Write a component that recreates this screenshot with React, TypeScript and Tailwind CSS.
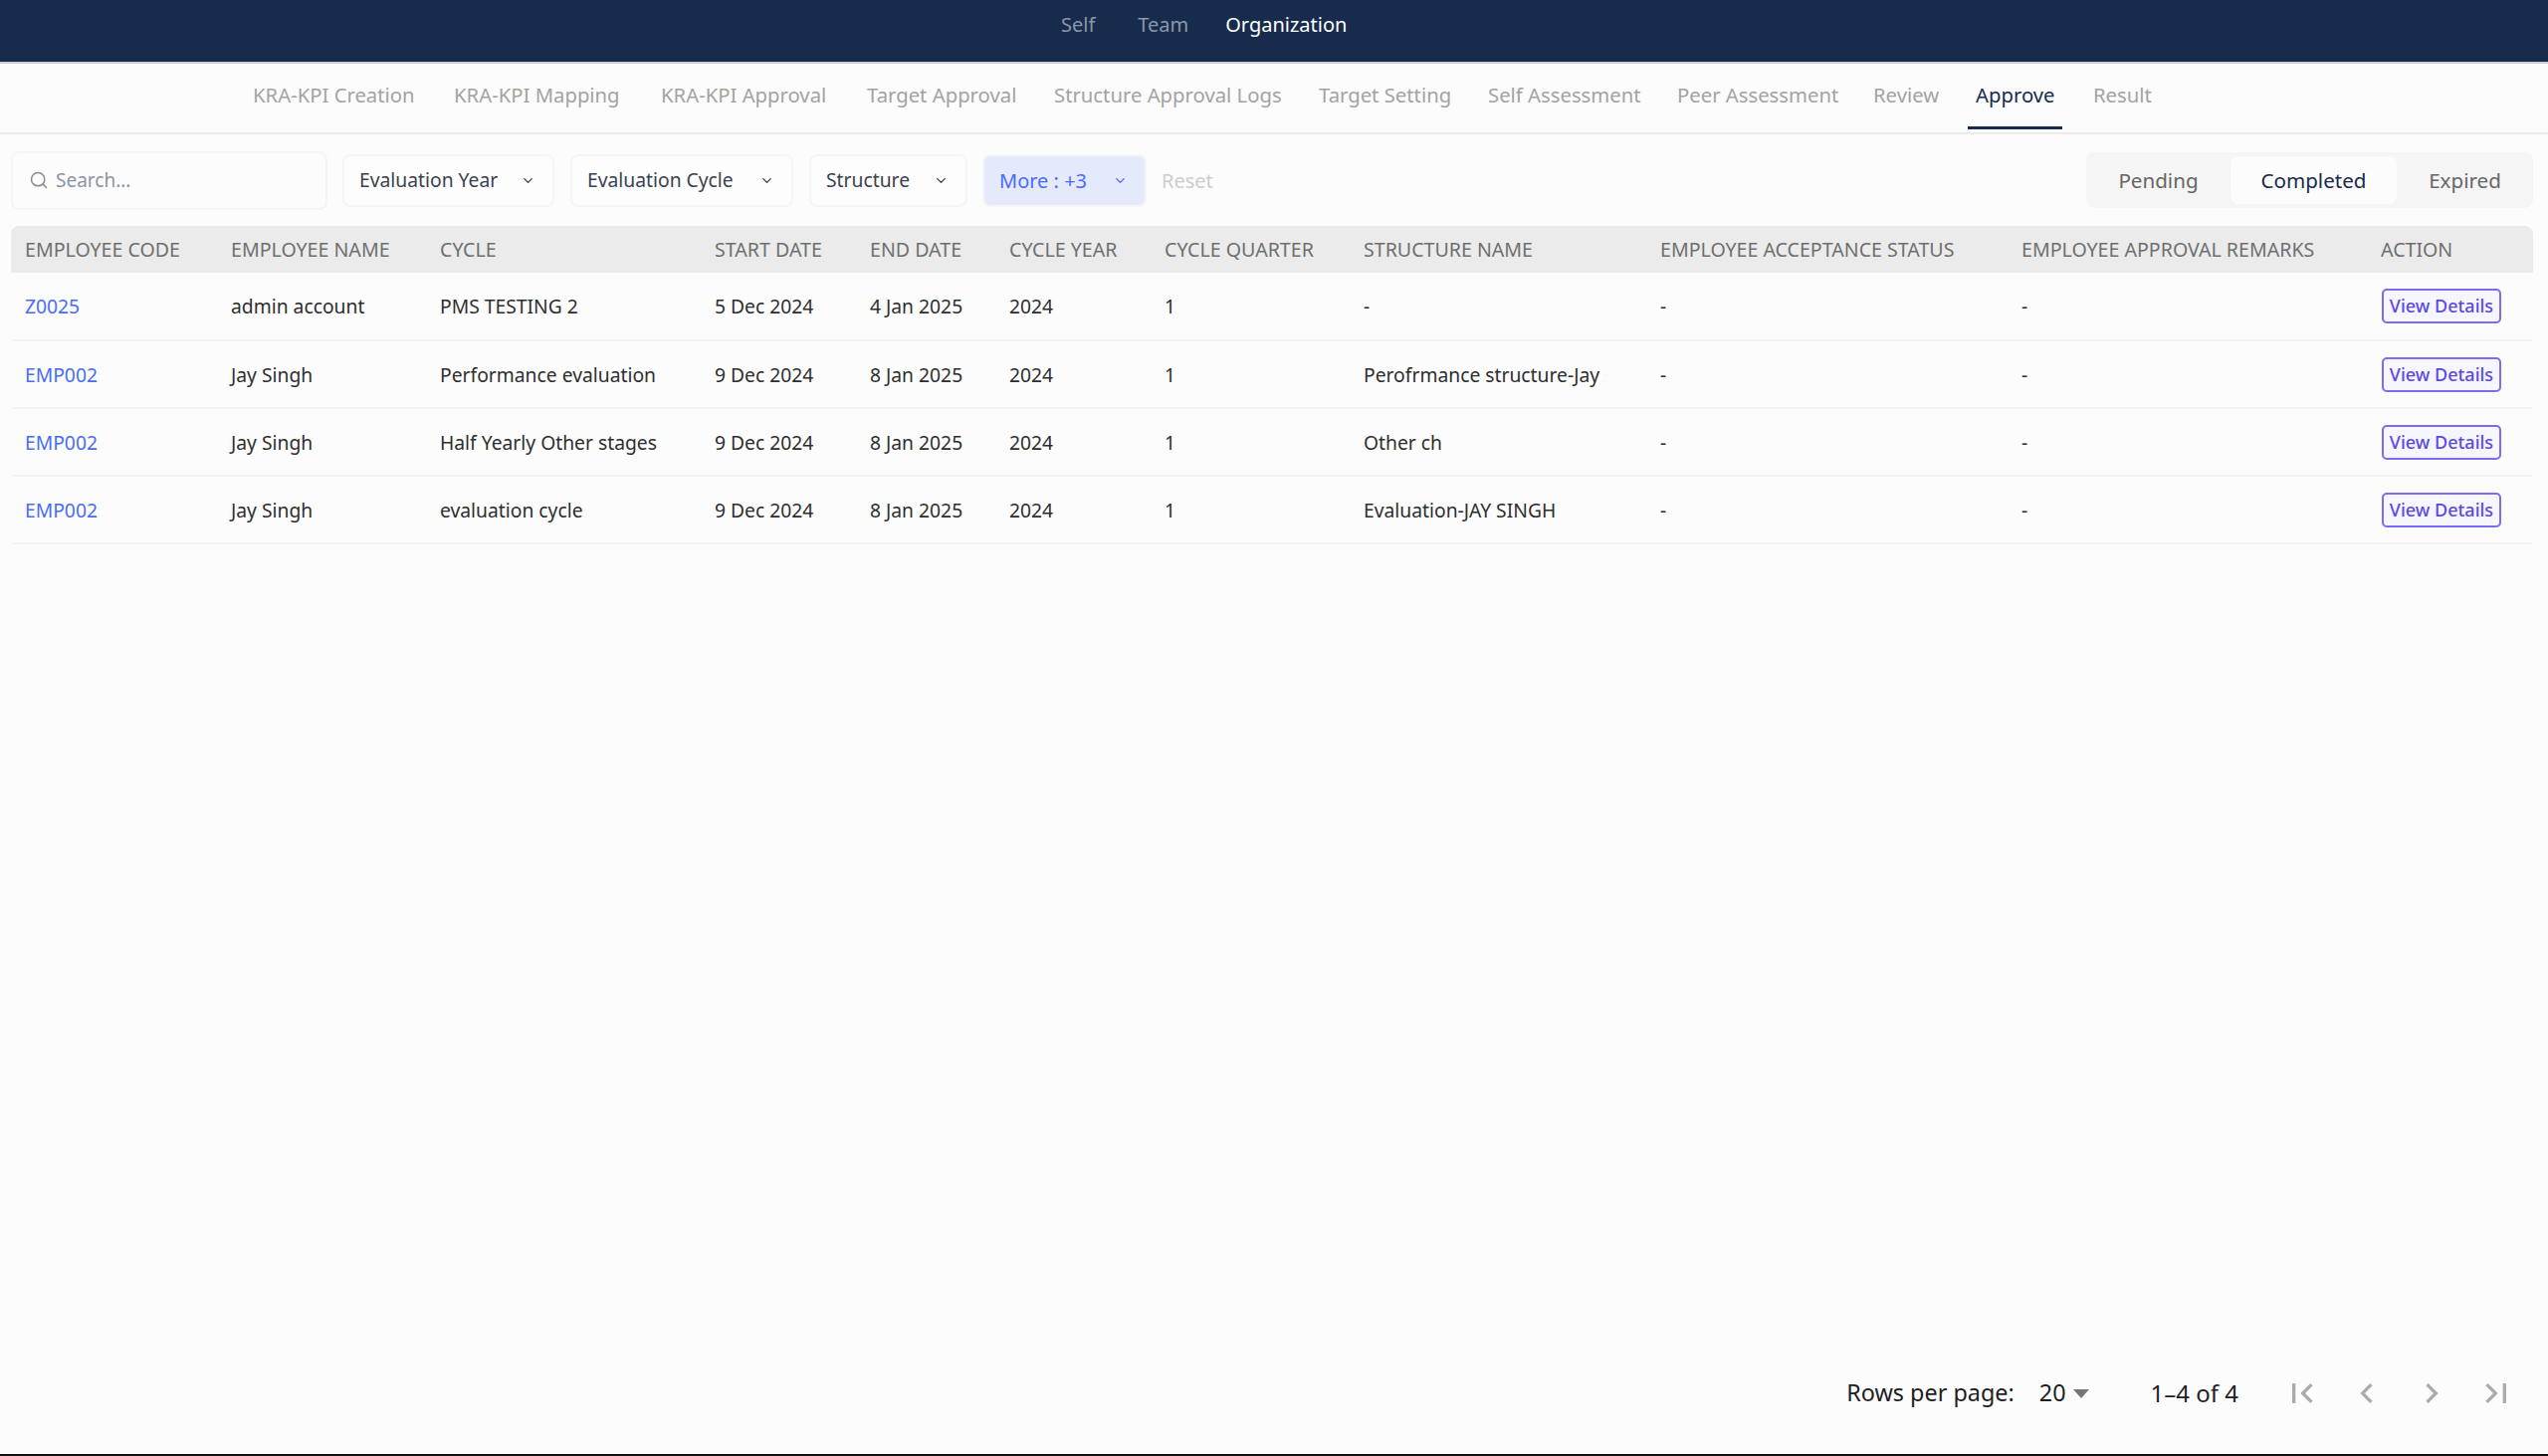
import React from 'react'
import { ChevronDown, Search } from 'lucide-react'

const topTabs = [
  { label: 'KRA-KPI Creation', width: 'w-[202px]' },
  { label: 'KRA-KPI Mapping', width: 'w-[208px]' },
  { label: 'KRA-KPI Approval', width: 'w-[207px]' },
  { label: 'Target Approval', width: 'w-[188px]' },
  { label: 'Structure Approval Logs', width: 'w-[266px]' },
  { label: 'Target Setting', width: 'w-[170px]' },
  { label: 'Self Assessment', width: 'w-[190px]' },
  { label: 'Peer Assessment', width: 'w-[197px]' },
  { label: 'Review', width: 'w-[103px]' },
  { label: 'Approve', width: 'w-[118px]' },
  { label: 'Result', width: 'w-[70px]' },
]

const columns = [
  { label: 'EMPLOYEE CODE', width: 'w-[207px]' },
  { label: 'EMPLOYEE NAME', width: 'w-[210px]' },
  { label: 'CYCLE', width: 'w-[276px]' },
  { label: 'START DATE', width: 'w-[156px]' },
  { label: 'END DATE', width: 'w-[140px]' },
  { label: 'CYCLE YEAR', width: 'w-[156px]' },
  { label: 'CYCLE QUARTER', width: 'w-[200px]' },
  { label: 'STRUCTURE NAME', width: 'w-[298px]' },
  { label: 'EMPLOYEE ACCEPTANCE STATUS', width: 'w-[363px]' },
  { label: 'EMPLOYEE APPROVAL REMARKS', width: 'w-[361px]' },
  { label: 'ACTION', width: 'w-[167px]' },
]

const rows = [
  ['Z0025', 'admin account', 'PMS TESTING 2', '5 Dec 2024', '4 Jan 2025', '2024', '1', '-', '-', '-'],
  ['EMP002', 'Jay Singh', 'Performance evaluation', '9 Dec 2024', '8 Jan 2025', '2024', '1', 'Perofrmance structure-Jay', '-', '-'],
  ['EMP002', 'Jay Singh', 'Half Yearly Other stages', '9 Dec 2024', '8 Jan 2025', '2024', '1', 'Other ch', '-', '-'],
  ['EMP002', 'Jay Singh', 'evaluation cycle', '9 Dec 2024', '8 Jan 2025', '2024', '1', 'Evaluation-JAY SINGH', '-', '-'],
]

const pageIcons = [
  'M18.41 16.59L13.82 12l4.59-4.59L17 6l-6 6 6 6zM6 6h2v12H6z',
  'M15.41 16.59L10.83 12l4.58-4.59L14 6l-6 6 6 6z',
  'M8.59 16.59L13.17 12 8.59 7.41 10 6l6 6-6 6z',
  'M5.59 7.41L10.18 12l-4.59 4.59L7 18l6-6-6-6zM16 6h2v12h-2z',
]

function Filter({ label, width }: { label: string; width: string }) {
  return (
    <div className={`${width} h-[53px] flex items-center justify-between pl-[15px] pr-[17px] bg-[#fdfdfd] border-2 border-[#f5f5f5] rounded-lg text-[19.3px] text-[#3a4250]`}>
      <span className="pt-px">{label}</span>
      <ChevronDown size={15} strokeWidth={2.2} />
    </div>
  )
}

export default function App() {
  return (
    <div className="w-full h-[1463px] flex flex-col bg-[#fcfcfc] border-b-2 border-[#111] text-[20px] font-['Noto_Sans',sans-serif] overflow-hidden">
      <div className="h-[64px] shrink-0 bg-[#172b4d] border-b-2 border-[#c9ccd2] flex items-start pl-[1066px] pt-[10px] gap-[43px] text-[#8c97a9]">
        <span>Self</span>
        <span>Team</span>
        <span className="-ml-[6px] text-white">Organization</span>
      </div>

      <div className="h-[71px] shrink-0 border-b-2 border-[#ebebeb] flex pl-[254px] text-[20.3px] text-[#a3a3a3]">
        {topTabs.map((tab) => (
          <div key={tab.label} className={`${tab.width} shrink-0`}>
            <div className="relative inline-block h-full pt-[16px]">
              <span className={tab.label === 'Approve' ? 'text-[#172b4d]' : ''}>{tab.label}</span>
              {tab.label === 'Approve' && <div className="absolute left-[-8px] right-[-8px] bottom-[3px] h-[3px] bg-[#172b4d]" />}
            </div>
          </div>
        ))}
      </div>

      <div className="h-[92px] shrink-0 flex items-center pl-[11px] pr-[15px]">
        <div className="w-[318px] h-[59px] flex items-center gap-[7px] pl-[16px] border-2 border-[#f5f5f5] rounded-lg text-[19px] text-[#8a94a6]">
          <Search size={20} strokeWidth={1.8} className="text-[#8b8b8b]" />
          <span className="pt-px">Search...</span>
        </div>
        <div className="flex items-center gap-4 ml-[15px]">
          <Filter label="Evaluation Year" width="w-[213px]" />
          <Filter label="Evaluation Cycle" width="w-[224px]" />
          <Filter label="Structure" width="w-[159px]" />
          <div className="w-[165px] h-[53px] -ml-px flex items-center justify-between pl-[15px] pr-[17px] bg-[#e4e9fc] border-2 border-[#f5f5f5] rounded-lg text-[#4a6cf7]">
            <span className="pt-px">More : +3</span>
            <ChevronDown size={15} strokeWidth={2.2} />
          </div>
        </div>
        <span className="ml-[15px] pt-px text-[#cdcdcd]">Reset</span>
        <div className="ml-auto w-[449px] h-[56px] flex items-center bg-[#f5f5f5] rounded-lg text-[20.6px] text-[#666]">
          <span className="w-[145px] pt-px text-center">Pending</span>
          <span className="h-[48px] w-[167px] pt-px flex items-center justify-center bg-[#fcfcfc] rounded-lg text-[#172b4d]">Completed</span>
          <span className="flex-1 pt-px text-center">Expired</span>
        </div>
      </div>

      <div className="pl-[11px] pr-[15px] shrink-0">
        <table className="w-[2534px] table-fixed border-collapse">
          <thead>
            <tr className="h-[47px] bg-[#ebebeb] text-[#6f6f6f] text-[19.6px]">
              {columns.map((col, i) => (
                <th key={col.label} className={`${col.width} pl-[14px] pt-px text-left font-normal ${i === 0 ? 'rounded-tl-lg' : ''} ${i === 10 ? 'rounded-tr-lg' : ''}`}>
                  {col.label}
                </th>
              ))}
            </tr>
          </thead>
          <tbody>
            {rows.map((row, r) => (
              <tr key={r} className="h-[68px] border-b-2 border-[#f4f4f4] text-[#2e2e2e] text-[19.3px]">
                {row.map((cell, i) => (
                  <td key={i} className={`pl-[14px] pt-[2px] ${i === 0 ? 'text-[#4a6cf7]' : ''}`}>{cell}</td>
                ))}
                <td className="pl-[15px]">
                  <button className="w-[120px] h-[35px] flex items-center justify-center bg-[#f5f6ff] border-2 border-[#7b6cf0] rounded-[5px] text-[#5b4ae0] text-[18px] font-medium">
                    View Details
                  </button>
                </td>
              </tr>
            ))}
          </tbody>
        </table>
      </div>

      <div className="mt-auto mb-[41px] flex items-center justify-end pr-[32px] text-[23.4px] text-[#1f1f1f]">
        <span>Rows per page:</span>
        <span className="ml-[25px]">20</span>
        <span className="ml-[7px] w-0 h-0 border-x-[8px] border-x-transparent border-t-[9px] border-t-[#757575]" />
        <span className="ml-[62px] text-[24px]">1–4 of 4</span>
        <div className="ml-[44px] flex gap-[25px]">
          {pageIcons.map((d) => (
            <svg key={d} viewBox="0 0 24 24" className="w-[40px] h-[40px] fill-[#ababab]">
              <path d={d} />
            </svg>
          ))}
        </div>
      </div>
    </div>
  )
}
